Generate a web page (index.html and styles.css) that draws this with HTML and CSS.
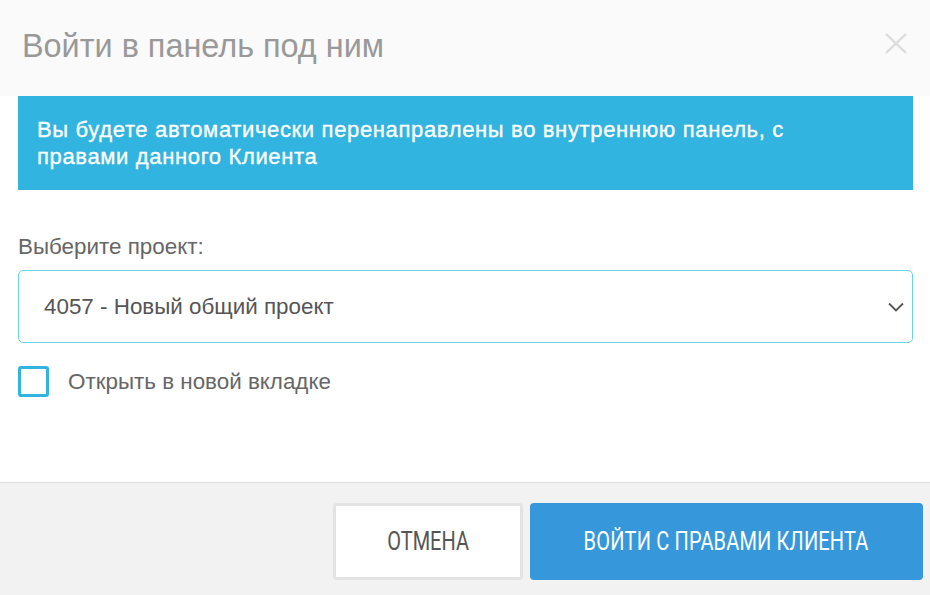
FILE: index.html
```html
<!DOCTYPE html>
<html lang="ru">
<head>
  <meta charset="UTF-8" />
  <title>Войти в панель под ним</title>
  <link rel="stylesheet" href="styles.css">
</head>
<body>
  <div class="modal">
    <div class="modal-header">
      <h2>Войти в панель под ним</h2>
      <span class="close">
        <svg width="22" height="21" viewBox="0 0 22 21"><path d="M1 1L21 20M21 1L1 20" stroke="#dcdcdc" stroke-width="2.4" fill="none"/></svg>
      </span>
    </div>

    <div class="modal-body">
      <div class="alert">
        <p>Вы будете автоматически перенаправлены во внутреннюю панель, с правами данного Клиента</p>
      </div>

      <label class="field-label">Выберите проект:</label>
      <div class="select">
        <span>4057 - Новый общий проект</span>
        <svg width="16" height="10" viewBox="0 0 16 10"><path d="M1 1.5L8 8.5L15 1.5" stroke="#555" stroke-width="1.8" fill="none"/></svg>
      </div>

      <label class="check">
        <span class="box"></span>
        <span>Открыть в новой вкладке</span>
      </label>
    </div>

    <div class="modal-footer">
      <button class="btn btn-cancel"><span>Отмена</span></button>
      <button class="btn btn-primary"><span>Войти с правами клиента</span></button>
    </div>
  </div>
</body>
</html>
```

FILE: styles.css
```css
body {
  margin: 0;
  padding: 0;
  font-family: 'Liberation Sans', Arial, sans-serif;
  background: #fff;
}
.modal {
  width: 930px;
  height: 595px;
  display: flex;
  flex-direction: column;
}
.modal-header {
  height: 96px;
  flex-shrink: 0;
  background: #fafafa;
  display: flex;
  align-items: center;
  justify-content: space-between;
  padding: 0 23px 0 22px;
  box-sizing: border-box;
}
.modal-header h2 {
  margin: 0;
  font-size: 32.4px;
  font-weight: normal;
  color: #999;
  padding-bottom: 4px;
}
.close {
  display: flex;
  padding-bottom: 10px;
}
.modal-body {
  flex: 1;
  padding: 0 17px 0 18px;
}
.alert {
  background: #31b4e0;
  height: 94px;
  box-sizing: border-box;
  padding: 20px 19px 0;
}
.alert p {
  margin: 0;
  max-width: 790px;
  color: #fff;
  font-size: 22px;
  line-height: 27px;
  letter-spacing: 0.65px;
  -webkit-text-stroke: 0.35px #fff;
}
.field-label {
  display: block;
  margin-top: 44px;
  font-size: 22.4px;
  color: #666;
}
.select {
  margin-top: 10px;
  height: 73px;
  box-sizing: border-box;
  border: 1px solid #66d6e2;
  border-radius: 5px;
  display: flex;
  align-items: center;
  justify-content: space-between;
  padding: 0 8px 0 25px;
  font-size: 22.4px;
  color: #555;
}
.check {
  display: flex;
  align-items: center;
  gap: 19px;
  margin-top: 23px;
  font-size: 22.4px;
  color: #666;
}
.box {
  width: 31px;
  height: 31px;
  box-sizing: border-box;
  border: 3px solid #31b4e0;
  border-radius: 3px;
}
.modal-footer {
  height: 113px;
  flex-shrink: 0;
  box-sizing: border-box;
  background: #f2f2f2;
  border-top: 1px solid #dedede;
  display: flex;
  justify-content: flex-end;
  align-items: flex-start;
  gap: 7px;
  padding: 20px 7px 0 0;
}
.btn {
  height: 77px;
  border-radius: 4px;
  font-family: Roboto, 'Liberation Sans', sans-serif;
  font-size: 25px;
  text-transform: uppercase;
  cursor: pointer;
}
.btn span {
  display: inline-block;
  transform: scaleX(0.8);
}
.btn-cancel {
  width: 190px;
  background: #fff;
  border: 3px solid #e3e3e3;
  color: #555;
}
.btn-primary {
  width: 393px;
  background: #3698db;
  border: none;
  color: #fff;
  letter-spacing: 0.2px;
}
```
